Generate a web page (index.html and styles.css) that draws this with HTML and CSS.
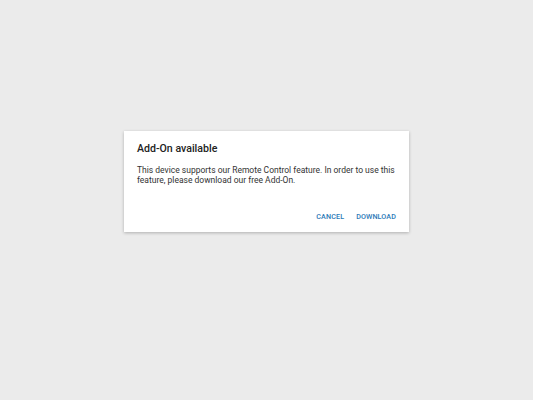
FILE: index.html
```html
<!DOCTYPE html>
<html>
<head>
<meta charset="utf-8">
<link rel="stylesheet" href="styles.css">
</head>
<body>
<div class="page">
  <div class="dialog">
    <div class="title">Add-On available</div>
    <div class="body">This device supports our Remote Control feature. In order to use this feature, please download our free Add-On.</div>
    <div class="actions">
      <span class="btn">CANCEL</span>
      <span class="btn">DOWNLOAD</span>
    </div>
  </div>
</div>
</body>
</html>
```
FILE: styles.css
```css
html, body {
  margin: 0;
  padding: 0;
  background: #ebebeb;
  width: 533px;
  height: 400px;
  overflow: hidden;
  font-family: Roboto, "Liberation Sans", sans-serif;
}
.page {
  display: flex;
  justify-content: center;
  padding-top: 131px;
}
.dialog {
  width: 285px;
  height: 101px;
  box-sizing: border-box;
  background: #fff;
  box-shadow: 0 1px 3px rgba(0,0,0,0.25);
  padding: 11px 8px 0 13px;
  display: flex;
  flex-direction: column;
}
.title {
  font-size: 10.6px;
  font-weight: 500;
  color: #222;
  line-height: 14px;
}
.body {
  margin-top: 9px;
  font-size: 8.5px;
  line-height: 10px;
  color: #333;
}
.actions {
  margin-top: 27px;
  display: flex;
  justify-content: flex-end;
  gap: 12px;
  padding-right: 5px;
}
.btn {
  font-size: 7.2px;
  font-weight: 500;
  color: #2b7ab8;
  letter-spacing: 0.1px;
  line-height: 10px;
}
```
